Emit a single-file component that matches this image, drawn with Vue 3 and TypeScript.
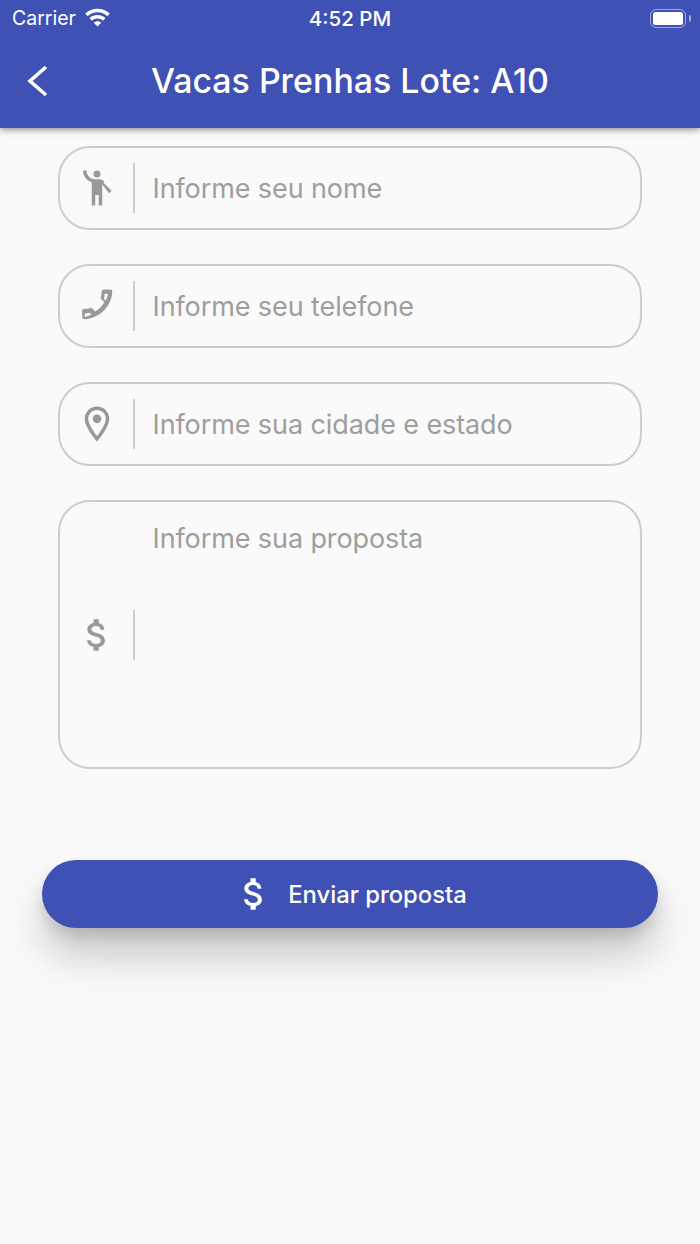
<script setup lang="ts">
interface Field {
  placeholder: string
  icon: 'person' | 'phone' | 'pin'
}
const fields: Field[] = [
  { placeholder: 'Informe seu nome', icon: 'person' },
  { placeholder: 'Informe seu telefone', icon: 'phone' },
  { placeholder: 'Informe sua cidade e estado', icon: 'pin' },
]
const dollar =
  'M11.8 10.9c-2.27-.59-3-1.2-3-2.15 0-1.09 1.01-1.85 2.7-1.85 1.78 0 2.44.85 2.5 2.1h2.21c-.07-1.72-1.12-3.3-3.21-3.81V3h-3v2.16c-1.94.42-3.5 1.68-3.5 3.61 0 2.31 1.91 3.46 4.7 4.13 2.5.6 3 1.48 3 2.41 0 .69-.49 1.79-2.7 1.79-2.06 0-2.87-.92-2.98-2.1h-2.2c.12 2.19 1.76 3.42 3.68 3.83V21h3v-2.15c1.95-.37 3.5-1.5 3.5-3.55 0-2.84-2.43-3.81-4.7-4.4z'
</script>

<template>
  <div class="page">
    <header class="appbar">
      <div class="status">
        <div class="status-left">
          <span>Carrier</span>
          <svg class="wifi" width="29" height="20" viewBox="0 0 26 18">
            <path fill="#fff" d="M13 1.5c4.3 0 8.2 1.7 11 4.4l-2.2 2.4C19.5 6.1 16.4 4.8 13 4.8S6.5 6.1 4.2 8.3L2 5.9C4.8 3.2 8.7 1.5 13 1.5z" />
            <path fill="#fff" d="M13 7.2c2.8 0 5.3 1.1 7.2 2.8l-2.2 2.4c-1.3-1.2-3.1-2-5-2s-3.7.8-5 2L5.8 10C7.7 8.3 10.2 7.2 13 7.2z" />
            <path fill="#fff" d="M13 12.8c1.3 0 2.4.5 3.3 1.3L13 17.6l-3.3-3.5c.9-.8 2-1.3 3.3-1.3z" />
          </svg>
        </div>
        <span class="clock">4:52 PM</span>
        <div class="status-right">
          <div class="battery"><div class="battery-fill"></div></div>
          <div class="battery-cap"></div>
        </div>
      </div>
      <div class="toolbar">
        <svg class="back" width="24" height="36" viewBox="0 0 24 36">
          <path d="M22 4 L6 18 L22 32" fill="none" stroke="#fff" stroke-width="3.6" />
        </svg>
        <h1 class="title">Vacas Prenhas Lote: A10</h1>
      </div>
    </header>

    <main class="form">
      <div v-for="f in fields" :key="f.icon" class="field">
        <div class="icon-cell">
          <svg v-if="f.icon === 'person'" width="42" height="42" viewBox="0 0 24 24" fill="#999">
            <circle cx="12" cy="4" r="2" />
            <path d="M15.89 8.11C15.5 7.72 14.83 7 13.53 7h-2.54C8.24 6.99 6 4.75 6 2H4c0 3.16 2.11 5.84 5 6.71V22h2v-6h2v6h2V10.05L18.95 15l1.41-1.41-4.47-4.48z" />
          </svg>
          <svg v-else-if="f.icon === 'phone'" width="42" height="42" viewBox="0 0 24 24" fill="#999">
            <path d="M19.5 2.5h-3.6c-.7 0-1.2.6-1.2 1.2 0 1.2-.2 2.3-.5 3.3-.1.4 0 .9.3 1.2l1.7 1.7c-1.2 2.2-3 4-5.2 5.2l-1.7-1.7c-.3-.3-.8-.4-1.2-.3-1 .3-2.2.5-3.3.5-.7 0-1.3.5-1.3 1.2v3.5c0 .7.6 1.2 1.3 1.2C13 19.5 20.7 11.8 20.7 3.7c0-.7-.5-1.2-1.2-1.2zM5 18.3v-2c1 0 1.9-.2 2.8-.4l1 1c-1.2.7-2.5 1.2-3.8 1.4zM18.3 5c-.2 1.4-.7 2.7-1.4 3.9l-1-1c.3-.9.4-1.9.5-2.9h1.9z" />
          </svg>
          <svg v-else width="42" height="42" viewBox="0 0 24 24" fill="#999">
            <path d="M12 2C8.13 2 5 5.13 5 9c0 5.25 7 13 7 13s7-7.75 7-13c0-3.87-3.13-7-7-7zM7 9c0-2.76 2.24-5 5-5s5 2.24 5 5c0 2.88-2.88 7.19-5 9.88C9.92 16.21 7 11.85 7 9z" />
            <circle cx="12" cy="9" r="2.5" />
          </svg>
        </div>
        <div class="divider"></div>
        <span class="placeholder">{{ f.placeholder }}</span>
      </div>

      <div class="field area">
        <div class="icon-cell">
          <svg width="42" height="42" viewBox="0 0 24 24" fill="#999"><path :d="dollar" /></svg>
        </div>
        <div class="divider"></div>
        <span class="placeholder area-text">Informe sua proposta</span>
      </div>

      <button class="send" type="button">
        <svg width="42" height="42" viewBox="0 0 24 24" fill="#fff"><path :d="dollar" /></svg>
        <span>Enviar proposta</span>
      </button>
    </main>
  </div>
</template>

<style>
html, body { margin: 0; background: #fafafa; }
</style>

<style scoped>
.page {
  height: 1244px;
  background: #fafafa;
  font-family: Inter, "Liberation Sans", sans-serif;
  overflow: hidden;
}
.appbar {
  height: 128px;
  background: #3f51b5;
  color: #fff;
  box-shadow: 0 2px 4px -1px rgba(0,0,0,.2), 0 4px 5px rgba(0,0,0,.14), 0 1px 10px rgba(0,0,0,.12);
  display: flex;
  flex-direction: column;
}
.status {
  height: 36px;
  display: grid;
  grid-template-columns: 1fr auto 1fr;
  align-items: center;
  padding: 0 9px 0 12px;
  font-size: 19.5px;
}
.status-left { display: flex; align-items: center; gap: 7px; }
.wifi { margin-top: -3px; }
.clock { font-weight: 500; font-size: 20.5px; margin-left: -3px; }
.status-right { display: flex; justify-content: flex-end; align-items: center; gap: 3px; }
.battery {
  width: 36px;
  height: 19px;
  box-sizing: border-box;
  padding: 2px;
  border: 1.5px solid rgba(255,255,255,.5);
  border-radius: 6px;
}
.battery-fill { height: 100%; background: #fff; border-radius: 2.5px; }
.battery-cap { width: 2px; height: 7px; background: rgba(255,255,255,.5); border-radius: 0 2px 2px 0; }
.toolbar {
  flex: 1;
  position: relative;
  display: flex;
  align-items: center;
  justify-content: center;
  padding-bottom: 2px;
}
.back { position: absolute; left: 24px; top: 27px; }
.title { margin: 0; font-size: 33.9px; font-weight: 500; line-height: 40px; }
.form {
  padding: 18px 58px 0;
  display: flex;
  flex-direction: column;
  gap: 34px;
}
.field {
  height: 84px;
  box-sizing: border-box;
  border: 2px solid #cdcdcd;
  border-radius: 32px;
  display: flex;
  align-items: center;
  position: relative;
}
.icon-cell { width: 73px; display: flex; justify-content: center; flex: none; }
.divider { width: 2px; height: 50px; background: #cdcdcd; flex: none; }
.placeholder {
  margin-left: 17.5px;
  font-size: 27px;
  color: #9e9e9e;
  letter-spacing: -.1px;
}
.field.area { height: 269px; }
.area-text { position: absolute; left: 75px; top: 21px; margin-left: 17.5px; line-height: 32px; }
.send {
  margin: 57px -16px 0;
  height: 68px;
  border: 0;
  border-radius: 34px;
  background: #3f51b5;
  color: #fff;
  font: 500 23.8px Inter, "Liberation Sans", sans-serif;
  display: flex;
  align-items: center;
  justify-content: center;
  gap: 13px;
  box-shadow: 0 28px 40px rgba(0,0,0,.2), 0 8px 14px rgba(0,0,0,.12);
}
</style>
